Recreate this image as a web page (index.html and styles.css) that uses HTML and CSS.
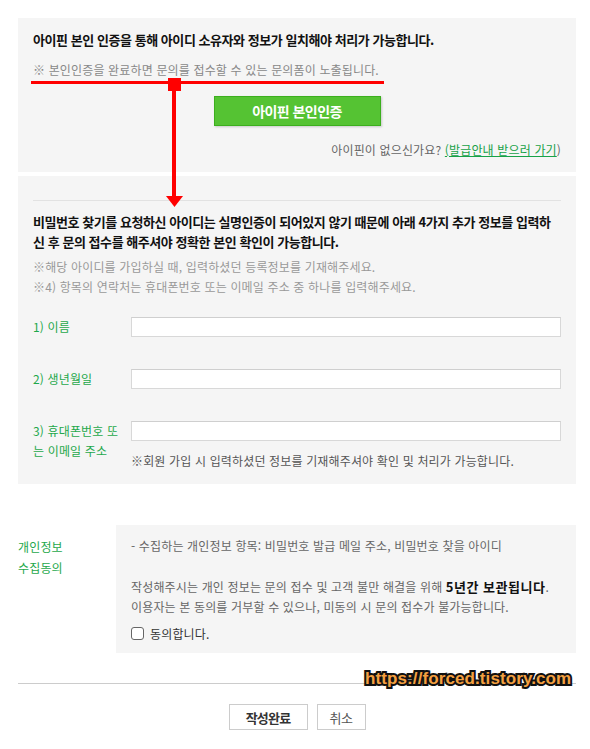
FILE: index.html
```html
<!DOCTYPE html>
<html lang="ko">
<head>
<meta charset="utf-8">
<title>비밀번호 찾기 문의</title>
<link rel="stylesheet" href="styles.css">
</head>
<body>
<div class="page">
  <section class="box auth">
    <p class="title">아이핀 본인 인증을 통해 아이디 소유자와 정보가 일치해야 처리가 가능합니다.</p>
    <p class="note">※ 본인인증을 완료하면 문의를 접수할 수 있는 문의폼이 노출됩니다.</p>
    <div class="btn-row"><button class="ipin-btn" type="button">아이핀 본인인증</button></div>
    <p class="noipin">아이핀이 없으신가요? <a href="#" class="link">(발급안내 받으러 가기</a>)</p>
  </section>

  <section class="box info">
    <div class="divider"></div>
    <p class="title lead">비밀번호 찾기를 요청하신 아이디는 실명인증이 되어있지 않기 때문에 아래 4가지 추가 정보를 입력하신 후 문의 접수를 해주셔야 정확한 본인 확인이 가능합니다.</p>
    <p class="subnote first">※해당 아이디를 가입하실 때, 입력하셨던 등록정보를 기재해주세요.</p>
    <p class="subnote">※4) 항목의 연락처는 휴대폰번호 또는 이메일 주소 중 하나를 입력해주세요.</p>

    <div class="fields">
      <div class="field">
        <label class="flabel" for="f1">1) 이름</label>
        <div class="fctrl"><input class="finput" id="f1" type="text"></div>
      </div>
      <div class="field">
        <label class="flabel" for="f2">2) 생년월일</label>
        <div class="fctrl"><input class="finput" id="f2" type="text"></div>
      </div>
      <div class="field">
        <label class="flabel" for="f3">3) 휴대폰번호 또는 이메일 주소</label>
        <div class="fctrl">
          <input class="finput" id="f3" type="text">
          <p class="fnote">※회원 가입 시 입력하셨던 정보를 기재해주셔야 확인 및 처리가 가능합니다.</p>
        </div>
      </div>
    </div>
  </section>

  <section class="privacy">
    <div class="plabel">개인정보<br>수집동의</div>
    <div class="pbox">
      <p class="ptext">- 수집하는 개인정보 항목: 비밀번호 발급 메일 주소, 비밀번호 찾을 아이디</p>
      <p class="ptext gap">작성해주시는 개인 정보는 문의 접수 및 고객 불만 해결을 위해 <strong class="strong">5년간 보관됩니다</strong>.</p>
      <p class="ptext">이용자는 본 동의를 거부할 수 있으나, 미동의 시 문의 접수가 불가능합니다.</p>
      <label class="agree"><input type="checkbox" class="chk"><span>동의합니다.</span></label>
    </div>
  </section>

  <div class="sep"></div>

  <div class="actions">
    <button class="act primary" type="button">작성완료</button>
    <button class="act" type="button">취소</button>
  </div>

  <div class="watermark">https://forced.tistory.com</div>

  <svg class="annot" width="353" height="130" viewBox="0 0 353 130" aria-hidden="true">
    <rect x="0" y="3" width="353" height="3" fill="#ff0000"/>
    <rect x="137" y="0" width="13" height="13" fill="#ff0000"/>
    <rect x="141" y="13" width="4" height="106" fill="#ff0000"/>
    <polygon points="135,118 152,118 143.5,129" fill="#ff0000"/>
  </svg>
</div>
</body>
</html>
```

FILE: styles.css
```css
* { box-sizing: border-box; }

html, body {
  margin: 0;
  padding: 0;
  background: #ffffff;
}

body {
  font-family: "Noto Sans CJK KR", "Noto Sans", sans-serif;
  font-size: 12px;
  color: #333;
}

p { margin: 0; }

.page {
  position: relative;
  width: 558px;
  margin: 18px 0 0 18px;
}

.box {
  background: #f5f5f5;
}

.auth {
  padding: 12px 15px 12px;
}

.title {
  font-size: 13px;
  font-weight: 700;
  line-height: 20px;
  color: #111;
  letter-spacing: -0.45px;
}

.note {
  margin-top: 10px;
  line-height: 20px;
  color: #888;
  letter-spacing: 0.15px;
}

.btn-row {
  margin-top: 16px;
  display: flex;
  justify-content: center;
}

.ipin-btn {
  width: 167px;
  height: 30px;
  background: #55c333;
  border: 1px solid #3caf1e;
  box-shadow: 1px 1px 2px rgba(0, 0, 0, 0.18);
  color: #fff;
  font-family: inherit;
  font-size: 14px;
  font-weight: 700;
  letter-spacing: -0.55px;
  padding: 0;
}

.noipin {
  margin-top: 14px;
  text-align: right;
  line-height: 20px;
  color: #666;
  letter-spacing: 0.15px;
}

.link {
  color: #17a248;
  text-decoration: underline;
}

.info {
  margin-top: 4px;
  padding: 24px 15px 13px;
}

.divider {
  height: 1px;
  background: #e2e2e2;
}

.lead {
  margin-top: 11px;
}

.subnote {
  line-height: 20px;
  color: #999;
  letter-spacing: 0.15px;
}

.subnote.first {
  margin-top: 5px;
}

.fields {
  margin-top: 20px;
  display: flex;
  flex-direction: column;
  gap: 32px;
}

.field {
  display: grid;
  grid-template-columns: 90px 1fr;
  column-gap: 8px;
}

.flabel {
  color: #1ea84b;
  line-height: 20px;
  letter-spacing: 0.15px;
}

.finput {
  display: block;
  width: 100%;
  height: 20px;
  margin: 0;
  border: 1px solid #d8d8d8;
  border-top-color: #cfcfcf;
  background: #fff;
  padding: 0 4px;
}

.fnote {
  margin-top: 10px;
  line-height: 20px;
  color: #555;
  letter-spacing: 0.15px;
}

.privacy {
  margin-top: 41px;
  display: flex;
}

.plabel {
  width: 98px;
  padding-top: 11px;
  line-height: 21px;
  color: #1ea84b;
  letter-spacing: 0.15px;
}

.pbox {
  flex: 1;
  background: #f5f5f5;
  padding: 11px 15px 10px;
}

.ptext {
  line-height: 20px;
  color: #666;
  letter-spacing: 0.15px;
}

.ptext.gap {
  margin-top: 21px;
}

.strong {
  font-size: 13px;
  font-weight: 700;
  color: #111;
  letter-spacing: 0.5px;
}

.agree {
  margin-top: 6px;
  display: flex;
  align-items: center;
  gap: 6px;
  height: 20px;
  color: #333;
  letter-spacing: 0.15px;
}

.chk {
  appearance: none;
  -webkit-appearance: none;
  width: 13px;
  height: 13px;
  margin: 0;
  border: 1px solid #666;
  border-radius: 3px;
  background: #fff;
}

.sep {
  margin-top: 30px;
  height: 1px;
  background: #cccccc;
}

.actions {
  margin-top: 20px;
  display: flex;
  justify-content: center;
  gap: 9px;
}

.act {
  height: 26px;
  width: 49px;
  padding: 0;
  background: #fff;
  border: 1px solid #cccccc;
  font-family: inherit;
  font-size: 13px;
  color: #555;
  letter-spacing: -0.5px;
}

.act.primary {
  width: 79px;
  font-weight: 700;
  color: #333;
  letter-spacing: -0.8px;
}

.watermark {
  position: absolute;
  left: 347px;
  top: 652px;
  font-family: "Liberation Sans", Arial, sans-serif;
  font-weight: 700;
  font-size: 17px;
  line-height: 17px;
  letter-spacing: 0.1px;
  color: #f4a040;
  -webkit-text-stroke: 4px #111;
  paint-order: stroke fill;
  white-space: nowrap;
}

.annot {
  position: absolute;
  left: 13px;
  top: 60px;
  overflow: visible;
}
```
